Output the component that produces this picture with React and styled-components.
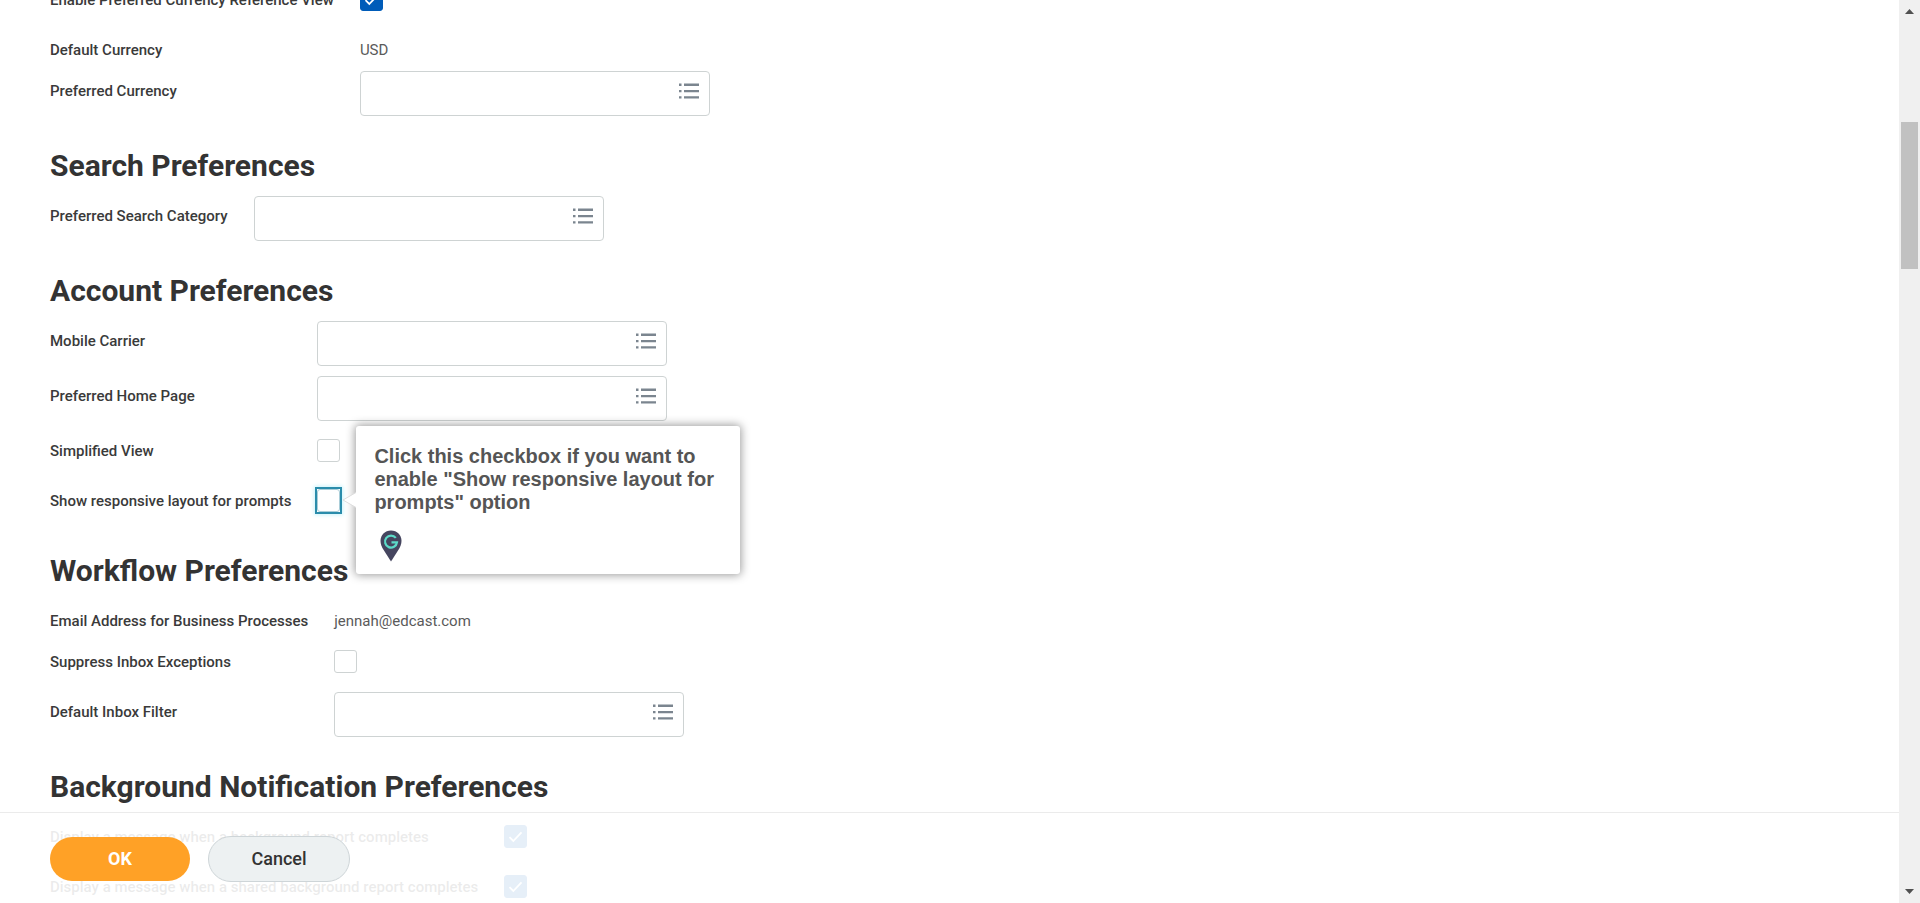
import React, { useState } from "react";
import styled, { createGlobalStyle } from "styled-components";

const GlobalStyle = createGlobalStyle`
  * {
    box-sizing: border-box;
  }
  body {
    margin: 0;
    background: white;
    color: #333333;
    font-family: Roboto, "Liberation Sans", sans-serif;
    font-size: 15px;
  }
  button,
  input {
    font-family: inherit;
  }
`;

const Page = styled.div`
  display: flex;
  height: 100vh;
  overflow: hidden;
`;

const Content = styled.main`
  position: relative;
  flex: 1;
  min-width: 0;
  overflow: hidden;
`;

/* the page is already scrolled into its first row */
const Form = styled.form`
  margin-top: -20px;
  padding: 0 50px;
`;

const Heading = styled.h2`
  margin: 0;
  padding: 20px 0 10px;
  font-size: 30px;
  line-height: 40px;
  font-weight: 700;
`;

const Rows = styled.div`
  display: grid;
  grid-template-columns: max-content 1fr;
  column-gap: 26px;
`;

const Label = styled.label`
  padding-top: 10px;
  color: #3a3a3a;
  font-weight: 500;
  line-height: 20px;
`;

const Value = styled.output`
  padding: 10px 0 11px;
  color: #5a5a5a;
  line-height: 20px;
`;

const PromptBox = styled.div`
  display: flex;
  align-items: flex-start;
  width: 350px;
  height: 45px;
  margin-bottom: 10px;
  border: 1px solid #ced3d3;
  border-radius: 4px;
  background: white;
`;

const PromptInput = styled.input`
  flex: 1;
  min-width: 0;
  height: 100%;
  padding: 0 12px;
  border: none;
  outline: none;
  background: transparent;
  font-size: 15px;
`;

const PromptButton = styled.button`
  display: flex;
  padding: 11px 10px;
  border: none;
  background: none;
  cursor: pointer;
`;

const CheckCell = styled.div`
  padding: 8px 0 19px;
`;

const CheckWrap = styled.span`
  display: block;
  position: relative;
  width: 23px;
  height: 23px;
  outline: ${(props) => (props.$highlight ? "2px solid #2a8cab" : "none")};
  box-shadow: ${(props) =>
    props.$highlight ? "0 0 4px 3px #c9f3fb" : "none"};
`;

const CheckInput = styled.input`
  display: block;
  appearance: none;
  width: 23px;
  height: 23px;
  margin: 0;
  border: 1px solid ${(props) => (props.$highlight ? "#a9cdd8" : "#ced3d3")};
  border-radius: 3px;
  background: white;
  cursor: pointer;
  &:checked {
    border-color: #005cb9;
    background: #005cb9;
  }
`;

const CheckMark = styled.svg`
  position: absolute;
  top: 0;
  left: 0;
  pointer-events: none;
`;

const Tooltip = styled.div`
  position: absolute;
  z-index: 1;
  top: -63px;
  left: 39px;
  width: 384px;
  padding: 19px 18px 12px;
  border-radius: 3px;
  background: white;
  box-shadow: 0 0 10px 1px rgba(0, 0, 0, 0.4);
  color: #555555;
`;

const TooltipText = styled.p`
  margin: 0 0 16px;
  font-family: "Liberation Sans", Arial, sans-serif;
  font-size: 20px;
  font-weight: 700;
  line-height: 23px;
`;

const TooltipArrow = styled.svg`
  position: absolute;
  top: 50%;
  left: -14px;
  margin-top: -8px;
`;

const Pin = styled.svg`
  display: block;
  margin-left: 6px;
`;

const Footer = styled.footer`
  position: absolute;
  right: 0;
  bottom: 0;
  left: 0;
  display: flex;
  gap: 17px;
  padding: 23px 49px 21px;
  border-top: 1px solid #ebebeb;
  background: rgba(255, 255, 255, 0.9);
`;

const Button = styled.button`
  width: 142px;
  height: 46px;
  padding: 0 0 2px;
  border: 1px solid ${(props) => (props.$primary ? "transparent" : "#ced5d8")};
  border-radius: 23px;
  background: ${(props) => (props.$primary ? "#ffa126" : "#edf1f2")};
  background-clip: ${(props) => (props.$primary ? "padding-box" : "border-box")};
  color: ${(props) => (props.$primary ? "white" : "#333333")};
  font-size: 18px;
  font-weight: ${(props) => (props.$primary ? 700 : 500)};
  cursor: pointer;
`;

const ScrollTrack = styled.div`
  display: flex;
  flex-direction: column;
  align-items: center;
  width: 21px;
  padding: 9px 2px;
  background: #f0f0f0;
`;

const ScrollThumb = styled.div`
  width: 17px;
  height: 147px;
  margin: 108px 0 auto;
  background: #c1c1c1;
`;

const ListIcon = () => (
  <svg width="20" height="17" viewBox="0 0 20 17" fill="#7b858f" aria-hidden="true">
    <path d="M0 0.5h2.5V3H0zM5 0.5h15V3H5zM0 6.9h2.5v2.3H0zM5 6.9h15v2.3H5zM0 13.2h2.5v2.4H0zM5 13.2h15v2.4H5z" />
  </svg>
);

const Prompt = ({ id, label }) => (
  <>
    <Label htmlFor={id}>{label}</Label>
    <PromptBox>
      <PromptInput id={id} type="text" />
      <PromptButton type="button" aria-label={`${label} list`}>
        <ListIcon />
      </PromptButton>
    </PromptBox>
  </>
);

const Checkbox = ({ id, label, initial = false, highlight, children }) => {
  const [checked, setChecked] = useState(initial);
  return (
    <>
      <Label htmlFor={id}>{label}</Label>
      <CheckCell>
        <CheckWrap $highlight={highlight}>
          <CheckInput
            id={id}
            type="checkbox"
            checked={checked}
            $highlight={highlight}
            onChange={(e) => setChecked(e.target.checked)}
          />
          {checked && (
            <CheckMark width="23" height="23" viewBox="0 0 23 23" fill="none">
              <path d="M5.5 12.2l3.8 3.8 8.2-8.6" stroke="white" strokeWidth="1.8" />
            </CheckMark>
          )}
          {children}
        </CheckWrap>
      </CheckCell>
    </>
  );
};

const ReadOnly = ({ id, label, value }) => (
  <>
    <Label htmlFor={id}>{label}</Label>
    <Value id={id}>{value}</Value>
  </>
);

const GuideTooltip = () => (
  <Tooltip role="tooltip">
    <TooltipArrow width="14" height="16" viewBox="0 0 14 16">
      <path d="M14 0.5L1 8l13 7.5z" fill="white" />
      <path d="M14 0.5L1 8l13 7.5" fill="none" stroke="#dddddd" />
    </TooltipArrow>
    <TooltipText>
      Click this checkbox if you want to enable "Show responsive layout for
      prompts" option
    </TooltipText>
    <Pin width="22" height="32" viewBox="0 0 22 32" fill="none">
      <path
        d="M11 0.5C5 0.5 0.5 5 0.5 11c0 3.2 1.3 6 3 8.7L11 31.5l7.5-11.8c1.7-2.7 3-5.5 3-8.7C21.5 5 17 0.5 11 0.5z"
        fill="#45455f"
      />
      <path
        d="M15.8 7.9A6 6 0 1 0 17 12.4H11.5"
        stroke="#5cdac8"
        strokeWidth="2.2"
      />
    </Pin>
  </Tooltip>
);

const App = () => {
  return (
    <>
      <GlobalStyle />
      <Page>
        <Content>
          <Form id="preferences" onSubmit={(e) => e.preventDefault()}>
            <Rows>
              <Checkbox
                id="currency-view"
                label="Enable Preferred Currency Reference View"
                initial
              />
              <ReadOnly id="default-currency" label="Default Currency" value="USD" />
              <Prompt id="preferred-currency" label="Preferred Currency" />
            </Rows>
            <Heading>Search Preferences</Heading>
            <Rows>
              <Prompt id="search-category" label="Preferred Search Category" />
            </Rows>
            <Heading>Account Preferences</Heading>
            <Rows>
              <Prompt id="mobile-carrier" label="Mobile Carrier" />
              <Prompt id="home-page" label="Preferred Home Page" />
              <Checkbox id="simplified-view" label="Simplified View" />
              <Checkbox
                id="responsive-layout"
                label="Show responsive layout for prompts"
                highlight
              >
                <GuideTooltip />
              </Checkbox>
            </Rows>
            <Heading>Workflow Preferences</Heading>
            <Rows>
              <ReadOnly
                id="email"
                label="Email Address for Business Processes"
                value="jennah@edcast.com"
              />
              <Checkbox id="suppress-inbox" label="Suppress Inbox Exceptions" />
              <Prompt id="inbox-filter" label="Default Inbox Filter" />
            </Rows>
            <Heading>Background Notification Preferences</Heading>
            <Rows>
              <Checkbox
                id="report-completes"
                label="Display a message when a background report completes"
                initial
              />
              <Checkbox
                id="shared-report-completes"
                label="Display a message when a shared background report completes"
                initial
              />
            </Rows>
          </Form>
          <Footer>
            <Button type="submit" form="preferences" $primary>
              OK
            </Button>
            <Button type="button">Cancel</Button>
          </Footer>
        </Content>
        <ScrollTrack aria-hidden="true">
          <svg width="9" height="5" viewBox="0 0 9 5">
            <path d="M4.5 0L9 5H0z" fill="#505050" />
          </svg>
          <ScrollThumb />
          <svg width="9" height="5" viewBox="0 0 9 5">
            <path d="M0 0h9L4.5 5z" fill="#505050" />
          </svg>
        </ScrollTrack>
      </Page>
    </>
  );
};

export default App;
